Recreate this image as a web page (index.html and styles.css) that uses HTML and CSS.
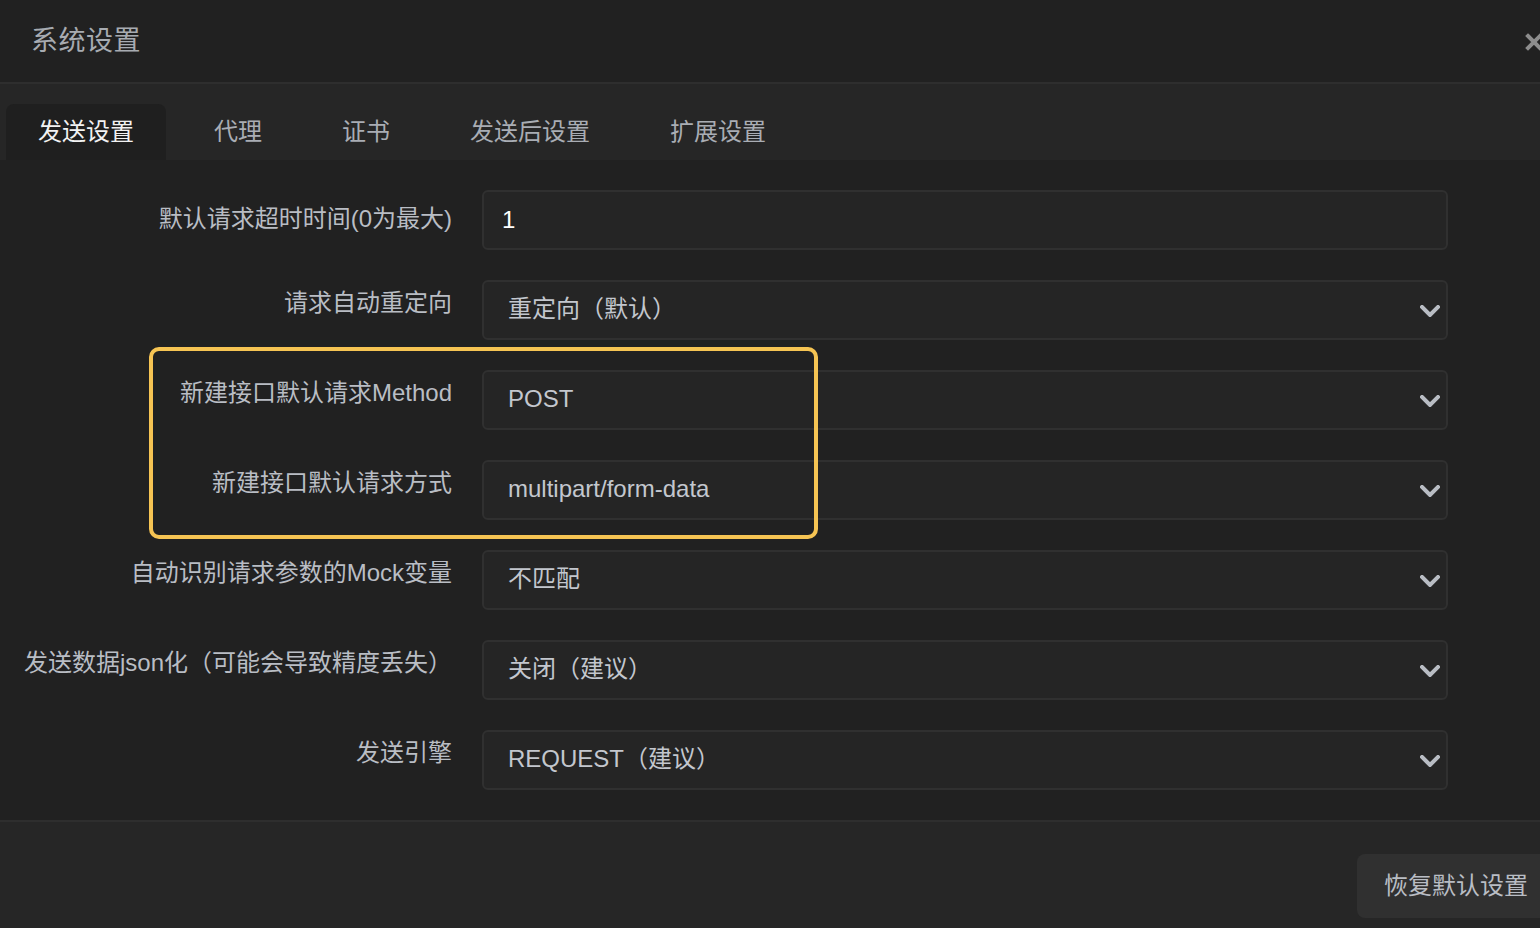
FILE: index.html
```html
<!DOCTYPE html>
<html lang="zh-CN">
<head>
<meta charset="utf-8">
<title>系统设置</title>
<link rel="stylesheet" href="styles.css">
</head>
<body>
<div class="dialog">
  <header class="header">
    <div class="title">系统设置</div>
    <svg class="close" viewBox="0 0 18 18" aria-label="关闭"><path d="M3 3 L15 15 M15 3 L3 15"/></svg>
  </header>
  <nav class="tabs">
    <div class="tab active">发送设置</div>
    <div class="tab">代理</div>
    <div class="tab">证书</div>
    <div class="tab">发送后设置</div>
    <div class="tab">扩展设置</div>
  </nav>
  <section class="form">
    <div class="row">
      <label class="label first">默认请求超时时间(0为最大)</label>
      <div class="field"><span class="value white">1</span></div>
    </div>
    <div class="row">
      <label class="label">请求自动重定向</label>
      <div class="field select"><span class="value">重定向（默认）</span><svg class="chev" viewBox="0 0 20 12"><polyline points="2,2 10,10 18,2"/></svg></div>
    </div>
    <div class="row">
      <label class="label">新建接口默认请求Method</label>
      <div class="field select"><span class="value">POST</span><svg class="chev" viewBox="0 0 20 12"><polyline points="2,2 10,10 18,2"/></svg></div>
    </div>
    <div class="row">
      <label class="label">新建接口默认请求方式</label>
      <div class="field select"><span class="value">multipart/form-data</span><svg class="chev" viewBox="0 0 20 12"><polyline points="2,2 10,10 18,2"/></svg></div>
    </div>
    <div class="row">
      <label class="label">自动识别请求参数的Mock变量</label>
      <div class="field select"><span class="value">不匹配</span><svg class="chev" viewBox="0 0 20 12"><polyline points="2,2 10,10 18,2"/></svg></div>
    </div>
    <div class="row">
      <label class="label">发送数据json化（可能会导致精度丢失）</label>
      <div class="field select"><span class="value">关闭（建议）</span><svg class="chev" viewBox="0 0 20 12"><polyline points="2,2 10,10 18,2"/></svg></div>
    </div>
    <div class="row">
      <label class="label">发送引擎</label>
      <div class="field select"><span class="value">REQUEST（建议）</span><svg class="chev" viewBox="0 0 20 12"><polyline points="2,2 10,10 18,2"/></svg></div>
    </div>
    <div class="highlight"></div>
  </section>
  <footer class="footer">
    <button class="reset">恢复默认设置</button>
  </footer>
</div>
</body>
</html>
```
FILE: styles.css
```css
* { box-sizing: border-box; }
html, body {
  margin: 0;
  padding: 0;
  background: #212121;
  overflow: hidden;
}
body {
  width: 1540px;
  height: 928px;
  font-family: "Liberation Sans", "Noto Sans CJK SC", sans-serif;
}
.dialog {
  display: flex;
  flex-direction: column;
  height: 928px;
}
.header {
  position: relative;
  height: 84px;
  padding-left: 31px;
  display: flex;
  align-items: center;
  padding-bottom: 6px;
  border-bottom: 2px solid #2e2e2e;
  background: #212121;
}
.title {
  font-size: 27px;
  color: #a7abb1;
  font-family: "Noto Sans CJK SC", sans-serif;
  letter-spacing: 0.5px;
}
.close {
  position: absolute;
  left: 1525px;
  top: 33px;
  width: 18px;
  height: 18px;
  fill: none;
  stroke: #8d8d8d;
  stroke-width: 4;
  stroke-linecap: square;
}
.tabs {
  height: 76px;
  background: #262626;
  display: flex;
  align-items: flex-end;
  gap: 16px;
  padding-left: 6px;
}
.tab {
  height: 56px;
  padding: 0 32px 6px;
  display: flex;
  align-items: center;
  font-size: 24px;
  color: #a9adb4;
  font-family: "Noto Sans CJK SC", sans-serif;
  border-radius: 8px 8px 0 0;
}
.tab.active {
  background: #1f1f1f;
  color: #f2f2f2;
}
.form {
  position: relative;
  flex: 1;
  padding: 30px 92px 30px 0;
  display: flex;
  flex-direction: column;
  gap: 30px;
  border-bottom: 2px solid #2e2e2e;
}
.row {
  display: flex;
  height: 60px;
  gap: 30px;
}
.label {
  width: 452px;
  flex-shrink: 0;
  text-align: right;
  font-size: 24px;
  color: #b9bdc4;
  padding-top: 8px;
  line-height: 30px;
  white-space: nowrap;
}
.label.first {
  padding-top: 14px;
}
.field {
  flex: 1;
  height: 60px;
  background: #252525;
  border: 2px solid #303030;
  border-radius: 6px;
  display: flex;
  align-items: center;
  padding: 0 6px 0 24px;
}
.value {
  flex: 1;
  font-size: 24px;
  color: #c3c7ce;
  line-height: 30px;
  padding-bottom: 3px;
}
.value.white {
  color: #ffffff;
  margin-left: -6px;
  padding-bottom: 0;
}
.chev {
  width: 20px;
  height: 12px;
  fill: none;
  stroke: #b9bdc4;
  stroke-width: 4;
  stroke-linecap: square;
  margin-top: 2px;
}
.highlight {
  position: absolute;
  left: 149px;
  top: 187px;
  width: 669px;
  height: 192px;
  border: 4px solid #f6c453;
  border-radius: 10px;
  pointer-events: none;
}
.footer {
  flex: 1;
  background: #262626;
  display: flex;
  justify-content: flex-end;
  align-items: flex-start;
  padding-top: 32px;
}
.reset {
  height: 64px;
  background: #303030;
  border: none;
  border-radius: 8px;
  padding: 0 30px 6px 27px;
  margin-right: -18px;
  font-size: 24px;
  color: #b9bdc4;
  font-family: "Noto Sans CJK SC", sans-serif;
}
```
